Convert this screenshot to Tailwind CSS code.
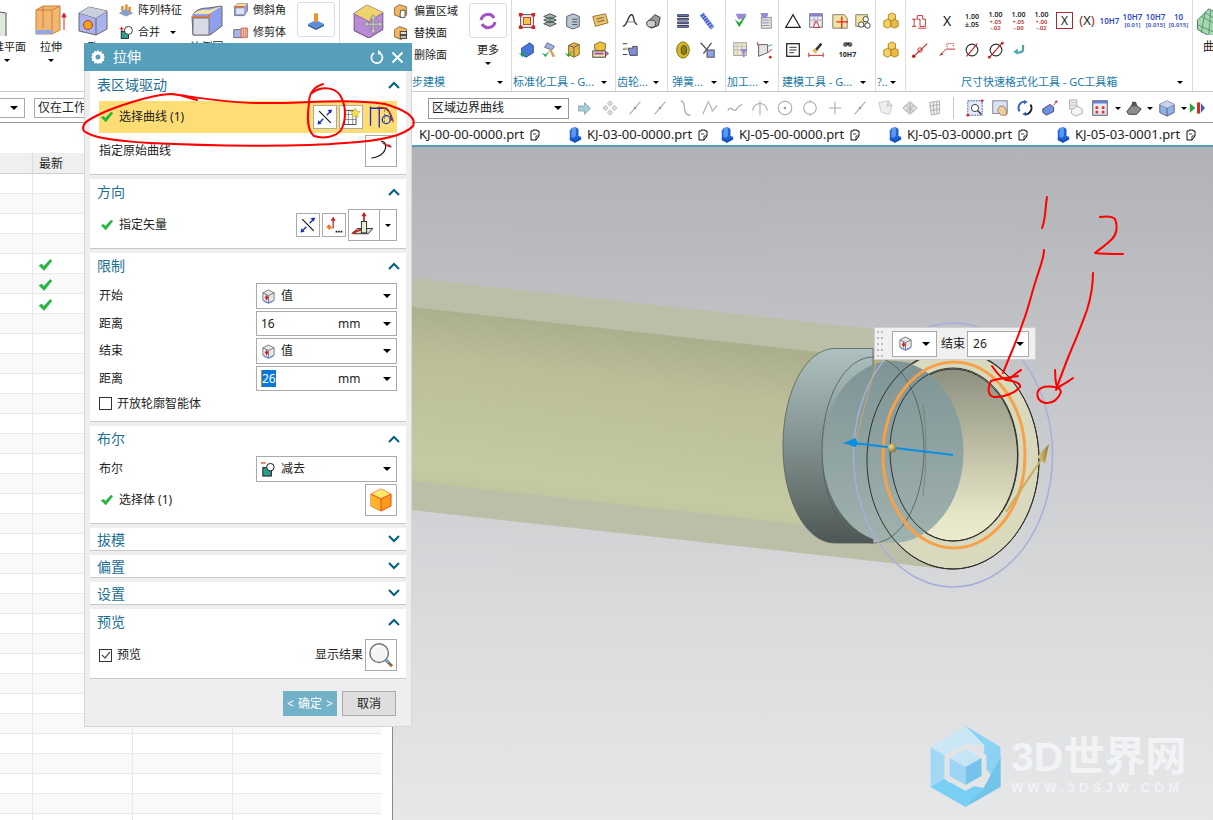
<!DOCTYPE html>
<html lang="zh-CN">
<head>
    <meta charset="UTF-8">
    <title>拉伸</title>
    <script src="https://cdn.jsdelivr.net/npm/@tailwindcss/browser@4"></script>
</head>
<body class="w-[1213px] h-[820px] overflow-hidden bg-white text-[#222] text-[12px] font-['Noto_Sans','Noto_Sans_CJK_SC',sans-serif]">

<!-- icon sheet -->
<svg class="hidden">
    <defs>
        <linearGradient id="gOrange" x1="0" y1="0" x2="0" y2="1"><stop offset="0" stop-color="#ffd23a"/><stop offset="1" stop-color="#ff7a10"/></linearGradient>
        <linearGradient id="gBlue" x1="0" y1="0" x2="1" y2="1"><stop offset="0" stop-color="#b9c4f5"/><stop offset="1" stop-color="#6a7fdc"/></linearGradient>
    </defs>
    <symbol id="bigPlane" viewBox="0 0 32 32"><path d="M-14 4 19 9v25L-14 28z" fill="#dfe8df" stroke="#555"/></symbol>
    <symbol id="bigExtrude" viewBox="0 0 32 32"><path d="M1 6 8 2h17v24l-8 4H1z" fill="#f3b671" stroke="#c9803a"/><path d="M1 6h16v24M17 6l8-4M8 2v22" fill="none" stroke="#c9803a"/><path d="M1 26h16v4H1z" fill="#8fa6e8"/><path d="M29 26V10M27 13l2-4 2 4z" stroke="#e02020" fill="#e02020"/></symbol>
    <symbol id="bigHole" viewBox="0 0 32 32"><path d="M2 9 12 3l18 4v18l-11 6-17-4z" fill="#a9b4ee" stroke="#666"/><path d="M2 9l17 5 11-7M19 14v17" fill="none" stroke="#666"/><path d="M2 9l10-6 18 4-11 7z" fill="#c8cfde"/><circle cx="11" cy="21" r="4.5" fill="#f2a21b" stroke="#b9362a"/></symbol>
    <symbol id="bigBlend" viewBox="0 0 32 32"><path d="M1 13C3 6 10 4 17 4l14-2v20l-12 9H2z" fill="#8f9ff0" stroke="#666"/><path d="M1 13C3 7 10 5 18 6l13-4-13 8H1z" fill="#efe3a8"/><path d="M1 13h17c0-2 0-3 0-3" fill="none" stroke="#e37a3c" stroke-width="2"/><path d="M2 14h16v17H2z" fill="#d7dbe6" stroke="#777"/></symbol>
    <symbol id="bigMove" viewBox="0 0 32 32"><path d="M2 9 14 1l15 7v16l-13 8-14-7z" fill="#b98ad6" stroke="#7d5a92"/><path d="M2 9l14 7 13-8" fill="none" stroke="#7d5a92"/><path d="M2 9 14 1l15 7-13 8z" fill="#f0d36a"/><path d="M20 10l3 4h-2v4h4v-2l4 3-4 3v-2h-4v4h2l-3 4-3-4h2v-4h-4v2l-4-3 4-3v2h4v-4h-2z" fill="#c6c6c6" stroke="#777" stroke-width=".6"/></symbol>
    <symbol id="pattern" viewBox="0 0 20 20"><path d="M1 14 10 8l9 6-9 4z" fill="#8aa0c8"/><rect x="4" y="5" width="3" height="6" fill="#e08a28"/><rect x="9" y="3" width="3" height="6" fill="#e08a28"/><rect x="13" y="6" width="3" height="6" fill="#e08a28"/></symbol>
    <symbol id="unite" viewBox="0 0 20 20"><path d="M2 6h5M4.500 3.500v5" stroke="#e02020" stroke-width="1.400"/><rect x="4" y="9" width="9" height="9" fill="#2f9c90" stroke="#111"/><circle cx="13" cy="8" r="5" fill="#fff" stroke="#111"/></symbol>
    <symbol id="chamfer" viewBox="0 0 20 20"><path d="M2 5 6 2h12v9l-4 6H2z" fill="#8ea3e8" stroke="#666"/><path d="M2 5l4-3h12l-4 4z" fill="#f2dca0"/><path d="M2 6h12" stroke="#e06a30" stroke-width="2"/><path d="M4 8h10v7H4z" fill="#dfe3ee"/></symbol>
    <symbol id="trim" viewBox="0 0 20 20"><path d="M1 7h11v10H1z" fill="#a8b6ee" stroke="#555"/><path d="M10 5h8v12h-8z" fill="#f0b592" stroke="#c55"/><path d="M13 5v12M16 5v12" stroke="#c55" stroke-dasharray="1.500 1.500"/></symbol>
    <symbol id="boss" viewBox="0 0 20 20"><path d="M2 14 10 10l8 4-8 4z" fill="#5c8fd8"/><path d="M2 14v2l8 4 8-4v-2l-8 4z" fill="#2e5fa8"/><rect x="8" y="3" width="4" height="9" rx="1.500" fill="#f0932e"/></symbol>
    <symbol id="offsetFace" viewBox="0 0 20 20"><path d="M2 6 8 2l9 3v10l-7 3-8-3z" fill="#f2b560" stroke="#7a5a2a"/><path d="M10 9h5v9h-6v-5z" fill="#fff" stroke="#333"/></symbol>
    <symbol id="replaceFace" viewBox="0 0 20 20"><path d="M2 6 8 2l9 3v10l-7 3-8-3z" fill="#f2b560" stroke="#7a5a2a"/><rect x="9" y="8" width="8" height="4" fill="#ddd" stroke="#333"/><rect x="9" y="13" width="8" height="4" fill="#bbb" stroke="#333"/></symbol>
    <symbol id="more" viewBox="0 0 20 20"><path d="M3 9a7 7 0 0 1 13-2" fill="none" stroke="#a052c8" stroke-width="3"/><path d="M17 11a7 7 0 0 1-13 2" fill="none" stroke="#a052c8" stroke-width="3"/></symbol>
    <symbol id="stdFrame" viewBox="0 0 20 20"><rect x="3" y="3" width="14" height="14" fill="none" stroke="#333"/><rect x="6" y="6" width="8" height="8" fill="#f2c649" stroke="#e02020"/><path d="M1 1h4v4H1zM15 1h4v4h-4zM1 15h4v4H1zM15 15h4v4h-4z" fill="#e02020"/></symbol>
    <symbol id="stack" viewBox="0 0 20 20"><path d="M3 5 10 2l7 3-7 3zM3 9l7-3 7 3-7 3zM3 13l7-3 7 3-7 3z" fill="#9db39b" stroke="#445"/></symbol>
    <symbol id="doc3d" viewBox="0 0 20 20"><path d="M3 5 10 2l7 3v11l-7 3-7-3z" fill="#b8c8c8" stroke="#557"/><path d="M9 8h6M9 11h6M9 14h6" stroke="#447"/></symbol>
    <symbol id="note" viewBox="0 0 20 20"><path d="M2 5 16 2l3 10-14 4z" fill="#efc468" stroke="#8a6a30"/><path d="M6 8l8-2M7 11l8-2" stroke="#555"/></symbol>
    <symbol id="blueCheck" viewBox="0 0 20 20"><path d="M4 8 13 2l4 3v8l-8 5-5-3z" fill="#4a78d8" stroke="#2a4a90"/><path d="M1 13l4 5 5-8-5 5z" fill="#1aa83c"/></symbol>
    <symbol id="hammerCheck" viewBox="0 0 20 20"><path d="M7 2l8 4-3 4-8-3z" fill="#9fb2e8" stroke="#667"/><path d="M11 9l5 8-3 1-4-8z" fill="#d8a060"/><path d="M1 13l4 5 5-8-5 5z" fill="#1aa83c"/></symbol>
    <symbol id="boxCheck" viewBox="0 0 20 20"><path d="M5 5 11 2l6 2v11l-6 3-6-3z" fill="#e9b640" stroke="#7a6a30"/><path d="M5 5l6 2 6-3M11 7v11" fill="none" stroke="#557"/><path d="M1 13l4 5 5-8-5 5z" fill="#1aa83c"/></symbol>
    <symbol id="boxTool" viewBox="0 0 20 20"><path d="M4 4 10 1l6 2v6l-6 3-6-3z" fill="#efc040" stroke="#7a6a30"/><rect x="2" y="11" width="14" height="7" fill="#f3e6a0" stroke="#333"/><path d="M4 14h10" stroke="#a040c0" stroke-width="2"/><path d="M17 11l3 3-3 3z" fill="#b040c0"/></symbol>
    <symbol id="gearLine" viewBox="0 0 20 20"><path d="M2 16C8 15 7 3 12 3c3 0 1 10 6 11" fill="none" stroke="#333" stroke-width="1.500"/><path d="M5 11h11" stroke="#777"/></symbol>
    <symbol id="gearSolid" viewBox="0 0 20 20"><path d="M3 12 12 3l6 3-2 9-8 3z" fill="#9a9a9a" stroke="#333"/><ellipse cx="8" cy="13" rx="5" ry="4" fill="#ccc" stroke="#333"/></symbol>
    <symbol id="gearMeasure" viewBox="0 0 20 20"><path d="M2 3h5M2 9h5M2 15h5" stroke="#333"/><path d="M8 8h5v-2h5v10h-8z" fill="#7f90d8" stroke="#445"/><path d="M8 8 5 6v4z" fill="#efc060"/></symbol>
    <symbol id="coil" viewBox="0 0 20 20"><path d="M4 3h12v2H4zM4 7h12v2H4zM4 11h12v2H4zM4 15h12v2H4z" fill="#6f83d8" stroke="#334"/></symbol>
    <symbol id="spring" viewBox="0 0 20 20"><path d="M4 2l12 16" stroke="#3f5ac8" stroke-width="5"/><path d="M4 2l12 16" stroke="#b9c6f4" stroke-width="5" stroke-dasharray="1 2"/></symbol>
    <symbol id="washer" viewBox="0 0 20 20"><ellipse cx="10" cy="10" rx="7" ry="9" fill="#d8b820" stroke="#7a6a10"/><ellipse cx="11" cy="10" rx="3" ry="5" fill="#8f8010" stroke="#443"/></symbol>
    <symbol id="scissor" viewBox="0 0 20 20"><path d="M3 2l11 12M15 2 6 14" stroke="#555" stroke-width="1.500"/><rect x="10" y="10" width="8" height="8" fill="#8ea3e8" stroke="#445"/></symbol>
    <symbol id="funnelCheck" viewBox="0 0 20 20"><path d="M4 2h12l-3 6h-6z" fill="#9c8ad8"/><path d="M3 8l5 9 9-15-9 10z" fill="#1aa83c"/></symbol>
    <symbol id="docFunnel" viewBox="0 0 20 20"><rect x="7" y="6" width="11" height="12" fill="#e6e6e6" stroke="#888"/><path d="M8 9h8M8 12h8M8 15h8" stroke="#88a"/><path d="M6 1h9l-2 6H8z" fill="#9c8ad8"/></symbol>
    <symbol id="gridFunnel" viewBox="0 0 20 20"><rect x="2" y="2" width="14" height="14" fill="#efe9c8" stroke="#999"/><path d="M2 6h14M2 10h14M6 2v14M11 2v14" stroke="#bbb"/><path d="M9 9h8l-3 5v4h-2v-4z" fill="#9c8ad8"/></symbol>
    <symbol id="axis" viewBox="0 0 20 20"><path d="M4 4v13l10-4V4z" fill="#e4e4e4" stroke="#555"/><path d="M3 1v4M14 13l5-4" stroke="#e02020"/><path d="M14 6l5-2" stroke="#2aa040"/><circle cx="17" cy="18" r="1.500" fill="#e02020"/></symbol>
    <symbol id="triangle" viewBox="0 0 20 20"><path d="M10 3 18 17H2z" fill="none" stroke="#222" stroke-width="1.400"/></symbol>
    <symbol id="tableTri" viewBox="0 0 20 20"><rect x="3" y="2" width="14" height="15" fill="#ecebf8" stroke="#667"/><rect x="3" y="2" width="14" height="3" fill="#8f7fc8"/><path d="M3 9h14M8 5v12M12 5v12" stroke="#aaa"/><path d="M10 10l4 7H7z" fill="#fff" stroke="#d02020"/></symbol>
    <symbol id="noteCross" viewBox="0 0 20 20"><path d="M2 3h13l3 4v11H2z" fill="#f4e4a0" stroke="#776"/><path d="M12 5v13M6 11h13" stroke="#e02020" stroke-width="1.400"/></symbol>
    <symbol id="folderParts" viewBox="0 0 20 20"><path d="M2 3h13v13H2z" fill="#f4e4a0" stroke="#776"/><circle cx="13" cy="8" r="3" fill="#fff" stroke="#333"/><circle cx="8" cy="14" r="3" fill="#fff" stroke="#333"/><circle cx="15" cy="15" r="3" fill="#fff" stroke="#333"/></symbol>
    <symbol id="cubes" viewBox="0 0 20 20"><path d="M7 3l4-2 4 2v5l-4 2-4-2z" fill="#f3cf64" stroke="#a88520"/><path d="M2 10l4-2 4 2v6l-4 2-4-2z" fill="#f3cf64" stroke="#a88520"/><path d="M10 10l4-2 4 2v6l-4 2-4-2z" fill="#ecb742" stroke="#a88520"/></symbol>
    <symbol id="lines" viewBox="0 0 20 20"><rect x="3" y="3" width="14" height="14" fill="#fff" stroke="#222" stroke-width="1.400"/><path d="M6 7h8M6 10h8M6 13h5" stroke="#222"/></symbol>
    <symbol id="brushDim" viewBox="0 0 20 20"><path d="M9 9l6-7 2 2-6 7z" fill="#333"/><path d="M8 8l4 4-3 2-3-3z" fill="#e6c050"/><path d="M2 13v5M18 13v5M2 16h16" stroke="#d02020"/></symbol>
    <symbol id="binoc" viewBox="0 0 20 20"><circle cx="5" cy="7" r="4" fill="#5a6a78" stroke="#222"/><circle cx="14" cy="7" r="4" fill="#5a6a78" stroke="#222"/><rect x="7" y="3" width="5" height="4" fill="#223"/></symbol>
    <symbol id="datum" viewBox="0 0 20 20"><path d="M7 4h6v4h3v8h-6V8H7z" fill="none" stroke="#c02020"/><path d="M1 8h5M1 16h5M3.500 8v8M8 18h9" stroke="#c02020"/></symbol>
    <symbol id="slashDim" viewBox="0 0 20 20"><path d="M3 17 18 3" stroke="#c02020" stroke-width="1.200"/><circle cx="3" cy="17" r="2" fill="#c02020"/><circle cx="10" cy="10" r="2.500" fill="none" stroke="#c02020"/></symbol>
    <symbol id="leader" viewBox="0 0 20 20"><path d="M2 16 9 9h10" fill="none" stroke="#c02020"/><path d="M2 16l4-1-2-2z" fill="#c02020"/><path d="M10 7V3h7v4" fill="none" stroke="#c02020" stroke-dasharray="1.500 1"/></symbol>
    <symbol id="dia1" viewBox="0 0 20 20"><circle cx="10" cy="10" r="6.500" fill="none" stroke="#333" stroke-width="1.300"/><path d="M4 17 16 3" stroke="#c02020" stroke-width="1.300"/></symbol>
    <symbol id="dia2" viewBox="0 0 20 20"><circle cx="10" cy="10" r="6.500" fill="none" stroke="#333" stroke-width="1.300"/><path d="M2 19 18 1" stroke="#c02020" stroke-width="1.300"/><circle cx="2.500" cy="18" r="1.500" fill="#c02020"/><circle cx="17" cy="2.500" r="1.500" fill="#c02020"/></symbol>
    <symbol id="backArrow" viewBox="0 0 20 20"><path d="M16 4v6c0 3-3 4-6 4H9" fill="none" stroke="#4aa5ad" stroke-width="3"/><path d="M3 13l6-4v8z" fill="#4aa5ad"/></symbol>
    <symbol id="mesh" viewBox="0 0 20 30"><path d="M2 14 14 2l16 8v14l-14 8L2 24z" fill="#a5d8b0" stroke="#3a7a58"/><path d="M6 10l18 10M10 6l16 10M2 19l20 9M10 6 6 28M16 4l-2 26M22 6l-2 24" fill="none" stroke="#3a7a58" stroke-width=".7"/></symbol>
    <symbol id="arrowR" viewBox="0 0 20 20"><path d="M3 7h7V3l7 7-7 7v-4H3z" fill="#a6cdd8" stroke="#7fa6b4"/></symbol>
    <symbol id="gDiamond" viewBox="0 0 20 20"><path d="M10 2l3 3-3 3-3-3zM10 12l3 3-3 3-3-3zM2 10l3-3 3 3-3 3zM12 10l3-3 3 3-3 3z" fill="#d8d8d8" stroke="#bbb"/></symbol>
    <symbol id="gLine" viewBox="0 0 20 20"><path d="M4 17 16 3" stroke="#aaa" stroke-width="1.200"/><circle cx="10" cy="10" r="1.500" fill="#999"/></symbol>
    <symbol id="gCurve" viewBox="0 0 20 20"><path d="M5 2c8 0 0 16 11 16" fill="none" stroke="#aaa" stroke-width="1.300"/></symbol>
    <symbol id="gPeak" viewBox="0 0 20 20"><path d="M2 17 8 3l5 10 5-6" fill="none" stroke="#aaa" stroke-width="1.200"/><circle cx="8" cy="4" r="1.500" fill="#ccc"/><circle cx="13" cy="13" r="1.500" fill="#ccc"/></symbol>
    <symbol id="gWave" viewBox="0 0 20 20"><path d="M2 13c4-8 6 4 10-2s4-3 6-5" fill="none" stroke="#aaa" stroke-width="1.300"/></symbol>
    <symbol id="gArc" viewBox="0 0 20 20"><path d="M2 13a8 8 0 0 1 16 0M10 2v16" fill="none" stroke="#aaa" stroke-width="1.200"/></symbol>
    <symbol id="gCircle" viewBox="0 0 20 20"><circle cx="10" cy="10" r="7.500" fill="none" stroke="#aaa" stroke-width="1.200"/><circle cx="10" cy="10" r="1.500" fill="#999"/></symbol>
    <symbol id="gRing" viewBox="0 0 20 20"><circle cx="10" cy="10" r="7" fill="none" stroke="#aaa" stroke-width="1.200"/><path d="M10 1v3M10 16v3" stroke="#aaa"/></symbol>
    <symbol id="gPlus" viewBox="0 0 20 20"><path d="M10 3v14M3 10h14" stroke="#aaa" stroke-width="1.200"/></symbol>
    <symbol id="gSheet" viewBox="0 0 20 20"><path d="M3 4 14 2l4 5-3 10-9-2z" fill="#eee" stroke="#c8c8c8"/><path d="M14 2l-2 6 6-1" fill="#ddd" stroke="#c8c8c8"/></symbol>
    <symbol id="gPatch" viewBox="0 0 20 20"><path d="M2 10 10 3l8 7-8 7z" fill="#ddd" stroke="#aaa"/><path d="M6 7l8 7M10 3v14M14 7l-8 7" stroke="#aaa"/></symbol>
    <symbol id="gGrid" viewBox="0 0 20 20"><path d="M4 4 15 2v14L6 18z" fill="#f0f0f0" stroke="#aaa"/><path d="M8 3l1 14M12 3v13M4 8l11-2M5 13l10-2" stroke="#aaa"/></symbol>
    <symbol id="viewBox" viewBox="0 0 20 20"><rect x="2" y="2" width="16" height="16" fill="#e6e9f6" stroke="#3355bb" stroke-dasharray="2 1"/><circle cx="10" cy="10" r="4" fill="#fff" stroke="#333"/><path d="M13 13l4 4" stroke="#333" stroke-width="1.500"/><circle cx="2" cy="18" r="1.500" fill="#d02020"/><circle cx="18" cy="2" r="1.500" fill="#d02020"/></symbol>
    <symbol id="viewHand" viewBox="0 0 20 20"><rect x="2" y="2" width="16" height="14" fill="#dbe2f2" stroke="#778"/><path d="M10 8h4l3 4v6h-6l-4-5z" fill="#f0cf9c" stroke="#977"/></symbol>
    <symbol id="viewRotate" viewBox="0 0 20 20"><path d="M4 14a7 7 0 0 1 6-11" fill="none" stroke="#3a60c8" stroke-width="2"/><path d="M16 6a7 7 0 0 1-6 11" fill="none" stroke="#223" stroke-width="2"/><path d="M9 1l4 2-4 3zM11 19l-4-2 4-3z" fill="#3a60c8"/></symbol>
    <symbol id="viewSpot" viewBox="0 0 20 20"><path d="M2 11 10 6l4 3v5l-8 4-4-3z" fill="#6f8fe0" stroke="#446"/><path d="M14 7l3-4" stroke="#e02020"/><circle cx="17" cy="3" r="1.300" fill="#e02020"/></symbol>
    <symbol id="viewSheets" viewBox="0 0 20 20"><rect x="4" y="1" width="8" height="10" fill="#eee" stroke="#aaa"/><path d="M5 4h6M5 7h6" stroke="#bbb"/><path d="M6 12l6-4 6 3v5l-7 3-5-3z" fill="#f4f4f4" stroke="#aaa"/></symbol>
    <symbol id="viewTable" viewBox="0 0 20 20"><rect x="2" y="2" width="16" height="16" fill="#e9edfb" stroke="#445"/><rect x="2" y="2" width="16" height="3" fill="#6f7fd0"/><path d="M5 8h3v3H5zM12 8h3v3h-3zM5 13h3v3H5zM12 13h3v3h-3z" fill="#e03820"/></symbol>
    <symbol id="viewPrism" viewBox="0 0 20 20"><path d="M2 14 9 5l9 6-5 6H4z" fill="#8d8d8d" stroke="#333"/><path d="M8 3h4l2 5H7z" fill="#555"/></symbol>
    <symbol id="viewCube" viewBox="0 0 20 20"><path d="M2 6 10 2l8 4v9l-8 4-8-4z" fill="#90b3e0" stroke="#557"/><path d="M2 6l8 4 8-4M10 10v9" fill="none" stroke="#557"/><path d="M2 6l8-4 8 4-8 4z" fill="#c4d4ec"/></symbol>
    <symbol id="viewMulti" viewBox="0 0 20 20"><path d="M1 4l7 6-7 6z" fill="#2aa040"/><path d="M10 3h4v14h-4z" fill="#d03020"/><path d="M15 4l5 6-5 6z" fill="#4060c0"/></symbol>
    <symbol id="part" viewBox="0 0 16 18"><path d="M4 1 9 0l3 2v8l3 1v3l-7 4-6-3V4z" fill="#1f62d8"/><path d="M4 1 9 0v10l-3 2-2-1z" fill="#5f9af0"/><path d="M2 13l6 3 7-3" fill="none" stroke="#0e3a90"/></symbol>
    <symbol id="page" viewBox="0 0 10 12"><path d="M1 2h2V1h4v1h2v5L6 11H1z" fill="#fff" stroke="#111"/><path d="M6 11V7h3M3 5h3" fill="none" stroke="#111" stroke-width=".8"/></symbol>
    <symbol id="check" viewBox="0 0 14 12"><path d="M0 6.500 3 5l2 2.500L12 0l2 1.500L5.500 12z" fill="#1ebb3b" stroke="#0c8f26" stroke-width=".4"/></symbol>
    <symbol id="up" viewBox="0 0 12 8"><path d="M1 7 6 2l5 5" fill="none" stroke="#006080" stroke-width="2"/></symbol>
    <symbol id="down" viewBox="0 0 12 8"><path d="M1 1l5 5 5-5" fill="none" stroke="#006080" stroke-width="2"/></symbol>
    <symbol id="vec" viewBox="0 0 24 24"><path d="M5 5l14 14" stroke="#111" stroke-width="1.300"/><path d="M14 10l6-6M4 20l6-6" stroke="#1a2fc0" stroke-width="1.600"/><path d="M20 3l-1 5-4-4zM3 21l1-5 4 4z" fill="#1a2fc0"/></symbol>
    <symbol id="sketchStar" viewBox="0 0 24 24"><rect x="4" y="4" width="14" height="17" fill="#fff" stroke="#333"/><path d="M4 9h14M4 15h14M9 4v17M14 4v17" stroke="#555" stroke-width=".7"/><path d="M17 1l2 4 4 .5-3 3 1 4-4-2-4 2 1-4-3-3 4-.5z" fill="#f4e04a" stroke="#b8a020" stroke-width=".6"/></symbol>
    <symbol id="regionCurve" viewBox="0 0 32 32"><path d="M4 4v22M4 6h18c3 2 5 6 6 14M14 6v22" fill="none" stroke="#1a2fc0" stroke-width="1.500"/><path d="M12 5c10-1 16 6 18 17" fill="none" stroke="#c02020" stroke-width="1.400"/><circle cx="22" cy="19" r="4.500" fill="none" stroke="#1a2fc0" stroke-width="1.500"/><path d="M20 8v16" stroke="#2a8a60" stroke-dasharray="2 2"/></symbol>
    <symbol id="originCurve" viewBox="0 0 32 32"><path d="M5 24c10-1 18-7 16-16-1-2-3-3-5-3" fill="none" stroke="#111" stroke-width="1.400"/><path d="M18 7l9 4" stroke="#c02020" stroke-width="1.300"/><path d="M29 12l-6-1 2-3z" fill="#c02020"/></symbol>
    <symbol id="inferVec" viewBox="0 0 24 24"><path d="M10 16a4 4 0 0 1-4-4" fill="none" stroke="#f07a20" stroke-width="1.500"/><path d="M3 14l3-3 3 3-3 4z" fill="#f07a20"/><path d="M11 16V5" stroke="#c02020" stroke-width="1.500"/><path d="M11 2l-3 5h6z" fill="#c02020"/><path d="M14 20h2M17 20h2M20 20h2" stroke="#111" stroke-width="2"/></symbol>
    <symbol id="zcVec" viewBox="0 0 32 32"><path d="M8 20h18l-5 6H3z" fill="#ddd" stroke="#222"/><rect x="13" y="12" width="6" height="13" fill="#dff0d0" stroke="#222"/><path d="M16 12V3" stroke="#c02020" stroke-width="2"/><path d="M16 1l-3 5h6z" fill="#c02020"/><path d="M13 21 3 25" stroke="#c02020" stroke-width="2"/><path d="M1 26l5-4 1 3z" fill="#c02020"/></symbol>
    <symbol id="valCube" viewBox="0 0 16 16"><path d="M2 4 8 1l6 3v8l-6 3-6-3z" fill="#e6e6e6" stroke="#777"/><path d="M2 4l6 3 6-3M8 7v8" fill="none" stroke="#777"/><path d="M3 13l5 2 5-2" fill="none" stroke="#6f8fe0" stroke-width="1.400"/><path d="M6 12V8M4.500 10 6 7.500 7.500 10" fill="none" stroke="#d02020" stroke-width="1.300"/></symbol>
    <symbol id="subtract" viewBox="0 0 16 16"><path d="M0 1h5" stroke="#d02020" stroke-width="1.200"/><rect x="2" y="6" width="9" height="9" fill="#2f9c90" stroke="#111"/><circle cx="10" cy="5.500" r="4" fill="#fff" stroke="#111"/></symbol>
    <symbol id="orangeCube" viewBox="0 0 24 24"><path d="M2 6 12 1l10 5v12l-10 5L2 18z" fill="#ff9a1e" stroke="#ee4a10"/><path d="M2 6l10 5v12L2 18z" fill="#ffb52a"/><path d="M2 6 12 1l10 5-10 5z" fill="#ffe66a"/><path d="M2 6l10 5 10-5M12 11v12" fill="none" stroke="#ee4a10"/></symbol>
    <symbol id="magnifier" viewBox="0 0 28 28"><circle cx="12" cy="12" r="10" fill="#f4f4f6" stroke="#777" stroke-width="1.600"/><path d="M5 11a7 7 0 0 1 7-7" fill="none" stroke="#fff" stroke-width="2"/><path d="M19 19l7 7" stroke="#8a7040" stroke-width="3"/><path d="M19 19l3 3" stroke="#6aa8c8" stroke-width="3"/></symbol>
</svg>

<!-- ribbon -->
<div class="flex h-[92px] border-b border-[#c9c9c9] bg-white overflow-hidden">
    <div class="w-[340px] shrink-0 border-r border-[#dcdcdc] flex pt-[4px]">
        <div class="w-[31px] flex flex-col">
            <svg class="w-[32px] h-[32px] -ml-[13px]"><use href="#bigPlane"/></svg>
            <span class="mt-[3px] -ml-[7px] text-[11px] leading-[16px] whitespace-nowrap">准平面</span>
            <span class="w-0 h-0 mt-[4px] ml-[4px] border-x-[3px] border-x-transparent border-t-[3px] border-t-black"></span>
        </div>
        <div class="w-[38px] ml-[1px] flex flex-col items-center">
            <svg class="w-[32px] h-[32px]"><use href="#bigExtrude"/></svg>
            <span class="mt-[3px] text-[11px] leading-[16px]">拉伸</span>
            <span class="w-0 h-0 mt-[4px] border-x-[3px] border-x-transparent border-t-[3px] border-t-black"></span>
        </div>
        <div class="w-[46px] flex flex-col items-center">
            <svg class="w-[32px] h-[32px]"><use href="#bigHole"/></svg>
            <span class="mt-[3px] text-[11px] leading-[16px]">孔</span>
        </div>
        <div class="w-[71px] flex flex-col gap-[6px] -mt-[2px]">
            <div class="flex items-center gap-[4px] pl-[2px] h-[16px]"><svg class="w-[16px] h-[16px]"><use href="#pattern"/></svg><span class="text-[11px] whitespace-nowrap">阵列特征</span></div>
            <div class="flex items-center gap-[4px] pl-[2px] h-[16px]"><svg class="w-[16px] h-[16px]"><use href="#unite"/></svg><span class="text-[11px]">合并</span><span class="w-0 h-0 ml-[6px] border-x-[3px] border-x-transparent border-t-[3px] border-t-black"></span></div>
        </div>
        <div class="w-[40px] flex flex-col items-center">
            <svg class="w-[32px] h-[32px]"><use href="#bigBlend"/></svg>
            <span class="mt-[3px] text-[11px] leading-[16px] whitespace-nowrap">边倒圆</span>
        </div>
        <div class="w-[70px] flex flex-col gap-[6px] -mt-[2px] pl-[4px]">
            <div class="flex items-center gap-[4px] pl-[2px] h-[16px]"><svg class="w-[16px] h-[16px]"><use href="#chamfer"/></svg><span class="text-[11px]">倒斜角</span></div>
            <div class="flex items-center gap-[4px] pl-[2px] h-[16px]"><svg class="w-[16px] h-[16px]"><use href="#trim"/></svg><span class="text-[11px]">修剪体</span></div>
        </div>
        <div class="w-[38px] h-[35px] -mt-[2px] border border-[#dcdcdc] rounded-[3px] flex items-center justify-center"><svg class="w-[20px] h-[20px]"><use href="#boss"/></svg></div>
    </div>
    <div class="w-[172px] shrink-0 border-r border-[#dcdcdc] flex flex-col">
        <div class="flex h-[73px] pt-[4px]">
            <div class="w-[48px] pl-[12px]"><svg class="w-[34px] h-[34px]"><use href="#bigMove"/></svg></div>
            <div class="w-[81px] flex flex-col gap-[6px] pl-[5px] -mt-[1px]">
                <div class="flex items-center gap-[5px] h-[16px]"><svg class="w-[16px] h-[16px]"><use href="#offsetFace"/></svg><span class="text-[11px] whitespace-nowrap">偏置区域</span></div>
                <div class="flex items-center gap-[5px] h-[16px]"><svg class="w-[16px] h-[16px]"><use href="#replaceFace"/></svg><span class="text-[11px]">替换面</span></div>
                <div class="flex items-center gap-[5px] h-[16px]"><span class="w-[16px]"></span><span class="text-[11px]">删除面</span></div>
            </div>
            <div class="w-[38px] flex flex-col items-center">
                <div class="w-[38px] h-[35px] -mt-[1px] border border-[#dcdcdc] rounded-[3px] flex items-center justify-center"><svg class="w-[20px] h-[20px]"><use href="#more"/></svg></div>
                <span class="mt-[4px] text-[11px] leading-[16px]">更多</span>
                <span class="w-0 h-0 mt-[4px] border-x-[3px] border-x-transparent border-t-[3px] border-t-black"></span>
            </div>
        </div>
        <div class="flex items-center h-[18px] pl-[72px] pr-[8px] justify-between text-[11px] text-[#1b7aa6]"><span>步建模</span><span class="w-0 h-0 border-x-[3px] border-x-transparent border-t-[3px] border-t-black"></span></div>
    </div>
    <div class="w-[104px] shrink-0 border-r border-[#dcdcdc] flex flex-col">
        <div class="grid grid-cols-[22px_24px_22px_31px] grid-rows-[29px_29px] h-[73px] pt-[6px] pl-[4px] place-items-center">
            <svg class="w-[18px] h-[18px]"><use href="#stdFrame"/></svg><svg class="w-[18px] h-[18px]"><use href="#stack"/></svg><svg class="w-[18px] h-[18px]"><use href="#doc3d"/></svg><svg class="w-[18px] h-[18px]"><use href="#note"/></svg>
            <svg class="w-[18px] h-[18px]"><use href="#blueCheck"/></svg><svg class="w-[18px] h-[18px]"><use href="#hammerCheck"/></svg><svg class="w-[18px] h-[18px]"><use href="#boxCheck"/></svg><svg class="w-[18px] h-[18px]"><use href="#boxTool"/></svg>
        </div>
        <div class="flex items-center h-[18px] pl-[1px] pr-[8px] justify-between text-[11px] text-[#1b7aa6]"><span class="whitespace-nowrap">标准化工具 - G...</span><span class="w-0 h-0 border-x-[3px] border-x-transparent border-t-[3px] border-t-black"></span></div>
    </div>
    <div class="w-[52px] shrink-0 border-r border-[#dcdcdc] flex flex-col">
        <div class="grid grid-cols-[22px_24px] grid-rows-[29px_29px] h-[73px] pt-[6px] pl-[3px] place-items-center">
            <svg class="w-[18px] h-[18px]"><use href="#gearLine"/></svg><svg class="w-[18px] h-[18px]"><use href="#gearSolid"/></svg>
            <svg class="w-[18px] h-[18px]"><use href="#gearMeasure"/></svg>
        </div>
        <div class="flex items-center h-[18px] pl-[1px] pr-[8px] justify-between text-[11px] text-[#1b7aa6]"><span>齿轮...</span><span class="w-0 h-0 border-x-[3px] border-x-transparent border-t-[3px] border-t-black"></span></div>
    </div>
    <div class="w-[58px] shrink-0 border-r border-[#dcdcdc] flex flex-col">
        <div class="grid grid-cols-[22px_26px] grid-rows-[29px_29px] h-[73px] pt-[6px] pl-[4px] place-items-center">
            <svg class="w-[18px] h-[18px]"><use href="#coil"/></svg><svg class="w-[18px] h-[18px]"><use href="#spring"/></svg>
            <svg class="w-[18px] h-[18px]"><use href="#washer"/></svg><svg class="w-[18px] h-[18px]"><use href="#scissor"/></svg>
        </div>
        <div class="flex items-center h-[18px] pl-[4px] pr-[8px] justify-between text-[11px] text-[#1b7aa6]"><span>弹簧...</span><span class="w-0 h-0 border-x-[3px] border-x-transparent border-t-[3px] border-t-black"></span></div>
    </div>
    <div class="w-[53px] shrink-0 border-r border-[#dcdcdc] flex flex-col">
        <div class="grid grid-cols-[22px_24px] grid-rows-[29px_29px] h-[73px] pt-[6px] pl-[4px] place-items-center">
            <svg class="w-[18px] h-[18px]"><use href="#funnelCheck"/></svg><svg class="w-[18px] h-[18px]"><use href="#docFunnel"/></svg>
            <svg class="w-[18px] h-[18px]"><use href="#gridFunnel"/></svg><svg class="w-[18px] h-[18px]"><use href="#axis"/></svg>
        </div>
        <div class="flex items-center h-[18px] pl-[1px] pr-[9px] justify-between text-[11px] text-[#1b7aa6]"><span>加工...</span><span class="w-0 h-0 border-x-[3px] border-x-transparent border-t-[3px] border-t-black"></span></div>
    </div>
    <div class="w-[97px] shrink-0 border-r border-[#dcdcdc] flex flex-col">
        <div class="grid grid-cols-[22px_24px_24px_22px] grid-rows-[29px_29px] h-[73px] pt-[6px] pl-[3px] place-items-center">
            <svg class="w-[18px] h-[18px]"><use href="#triangle"/></svg><svg class="w-[18px] h-[18px]"><use href="#tableTri"/></svg><svg class="w-[18px] h-[18px]"><use href="#noteCross"/></svg><svg class="w-[18px] h-[18px]"><use href="#folderParts"/></svg>
            <svg class="w-[18px] h-[18px]"><use href="#lines"/></svg><svg class="w-[18px] h-[18px]"><use href="#brushDim"/></svg>
            <div class="col-span-2 pl-[5px] flex flex-col items-center w-[24px] justify-self-start ml-[5px]"><svg class="w-[14px] h-[10px]"><use href="#binoc"/></svg><span class="text-[7px] leading-[8px] font-bold whitespace-nowrap">10H7</span></div>
        </div>
        <div class="flex items-center h-[18px] pl-[3px] pr-[9px] justify-between text-[11px] text-[#1b7aa6]"><span class="whitespace-nowrap">建模工具 - G...</span><span class="w-0 h-0 border-x-[3px] border-x-transparent border-t-[3px] border-t-black"></span></div>
    </div>
    <div class="w-[30px] shrink-0 border-r border-[#dcdcdc] flex flex-col">
        <div class="grid grid-rows-[29px_29px] h-[73px] pt-[6px] place-items-center">
            <svg class="w-[18px] h-[18px]"><use href="#cubes"/></svg><svg class="w-[18px] h-[18px]"><use href="#cubes"/></svg>
        </div>
        <div class="flex items-center h-[18px] pl-[1px] pr-[9px] justify-between text-[11px] text-[#1b7aa6]"><span>?..</span><span class="w-0 h-0 border-x-[3px] border-x-transparent border-t-[3px] border-t-black"></span></div>
    </div>
    <div class="w-[287px] shrink-0 border-r border-[#dcdcdc] flex flex-col">
        <div class="grid grid-cols-[28px_26px_24px_23px_23px_23px_23px_22px_23px_23px_23px_23px] grid-rows-[29px_29px] h-[73px] pt-[6px] place-items-center">
            <svg class="w-[18px] h-[18px]"><use href="#datum"/></svg>
            <span class="text-[14px] leading-none">X</span>
            <div class="flex flex-col items-center text-[7px] leading-[8px] font-semibold"><span>1.00</span><span>±.05</span></div>
            <div class="flex flex-col items-center text-[6px] leading-[6px] font-semibold"><span class="text-[7px] leading-[8px]">1.00</span><span class="text-[#b03030]">+.05</span><span class="text-[#b03030]">-.02</span></div>
            <div class="flex flex-col items-center text-[6px] leading-[6px] font-semibold"><span class="text-[7px] leading-[8px]">1.00</span><span class="text-[#b03030]">+.05</span><span class="text-[#b03030]">-.00</span></div>
            <div class="flex flex-col items-center text-[6px] leading-[6px] font-semibold"><span class="text-[7px] leading-[8px]">1.00</span><span class="text-[#b03030]">+.00</span><span class="text-[#b03030]">-.02</span></div>
            <span class="w-[17px] h-[17px] border-[1.5px] border-[#a03030] flex items-center justify-center text-[12px] leading-none">X</span>
            <span class="text-[13px] leading-none text-[#222] before:content-['('] before:text-[#a03030] after:content-[')'] after:text-[#a03030]">X</span>
            <span class="text-[8px] leading-none text-[#3348c8] font-semibold">10H7</span>
            <div class="flex flex-col items-center text-[8px] leading-[8px] text-[#3348c8] font-semibold"><span>10H7</span><span class="text-[6px]">[0.01]</span></div>
            <div class="flex flex-col items-center text-[8px] leading-[8px] text-[#3348c8] font-semibold"><span>10H7</span><span class="text-[6px]">[0.015]</span></div>
            <div class="flex flex-col items-center text-[8px] leading-[8px] text-[#3348c8] font-semibold"><span>10</span><span class="text-[6px]">[0.015]</span></div>
            <svg class="w-[18px] h-[18px]"><use href="#slashDim"/></svg><svg class="w-[18px] h-[18px]"><use href="#leader"/></svg><svg class="w-[18px] h-[18px]"><use href="#dia1"/></svg><svg class="w-[18px] h-[18px]"><use href="#dia2"/></svg><svg class="w-[15px] h-[15px]"><use href="#backArrow"/></svg>
        </div>
        <div class="relative flex items-center h-[18px] pl-[55px] pr-[9px] justify-between text-[11px] text-[#1b7aa6]"><span class="whitespace-nowrap">尺寸快速格式化工具 - GC工具箱</span><span class="w-0 h-0 border-x-[3px] border-x-transparent border-t-[3px] border-t-black"></span></div>
    </div>
    <div class="flex-1 flex flex-col overflow-hidden pt-[7px]">
        <svg class="w-[20px] h-[28px] shrink-0 ml-[2px]"><use href="#mesh"/></svg>
        <span class="ml-[10px] mt-[4px] leading-[16px] whitespace-nowrap">曲</span>
    </div>
</div>

<!-- selection bar -->
<div class="flex items-center h-[31px] pt-[2px] border-b border-[#9a9a9a] bg-white overflow-hidden">
    <div class="w-[25px] h-[20px] shrink-0 border border-[#aaa] border-l-0 flex items-center justify-end pr-[6px]"><span class="w-0 h-0 border-x-[4px] border-x-transparent border-t-[4px] border-t-black"></span></div>
    <div class="w-[64px] h-[20px] shrink-0 ml-[9px] pl-[3px] border border-[#aaa] border-r-0 whitespace-nowrap leading-[18px]">仅在工作部</div>
    <div class="w-[330px] shrink-0"></div>
    <div class="w-[141px] h-[21px] shrink-0 border border-[#999] pl-[3px] pr-[6px] flex items-center justify-between"><span>区域边界曲线</span><span class="w-0 h-0 border-x-[4px] border-x-transparent border-t-[4px] border-t-black"></span></div>
    <div class="shrink-0 ml-[3px] flex items-center">
        <span class="w-[25px] flex justify-center"><svg class="w-[17px] h-[17px]"><use href="#arrowR"/></svg></span>
        <span class="w-[25px] flex justify-center"><svg class="w-[18px] h-[18px]"><use href="#gDiamond"/></svg></span>
        <span class="w-[25px] flex justify-center"><svg class="w-[18px] h-[18px]"><use href="#gLine"/></svg></span>
        <span class="w-[25px] flex justify-center"><svg class="w-[18px] h-[18px]"><use href="#gLine"/></svg></span>
        <span class="w-[25px] flex justify-center"><svg class="w-[18px] h-[18px]"><use href="#gCurve"/></svg></span>
        <span class="w-[25px] flex justify-center"><svg class="w-[18px] h-[18px]"><use href="#gPeak"/></svg></span>
        <span class="w-[25px] flex justify-center"><svg class="w-[18px] h-[18px]"><use href="#gWave"/></svg></span>
        <span class="w-[25px] flex justify-center"><svg class="w-[18px] h-[18px]"><use href="#gArc"/></svg></span>
        <span class="w-[25px] flex justify-center"><svg class="w-[18px] h-[18px]"><use href="#gCircle"/></svg></span>
        <span class="w-[25px] flex justify-center"><svg class="w-[18px] h-[18px]"><use href="#gRing"/></svg></span>
        <span class="w-[25px] flex justify-center"><svg class="w-[18px] h-[18px]"><use href="#gPlus"/></svg></span>
        <span class="w-[25px] flex justify-center"><svg class="w-[18px] h-[18px]"><use href="#gLine"/></svg></span>
        <span class="w-[25px] flex justify-center"><svg class="w-[18px] h-[18px]"><use href="#gSheet"/></svg></span>
        <span class="w-[25px] flex justify-center"><svg class="w-[18px] h-[18px]"><use href="#gPatch"/></svg></span>
        <span class="w-[25px] flex justify-center"><svg class="w-[18px] h-[18px]"><use href="#gGrid"/></svg></span>
        <span class="w-[1px] h-[22px] bg-[#ccc] ml-[6px] mr-[8px]"></span>
        <span class="w-[25px] flex justify-center"><svg class="w-[18px] h-[18px]"><use href="#viewBox"/></svg></span>
        <span class="w-[25px] flex justify-center"><svg class="w-[18px] h-[18px]"><use href="#viewHand"/></svg></span>
        <span class="w-[25px] flex justify-center"><svg class="w-[18px] h-[18px]"><use href="#viewRotate"/></svg></span>
        <span class="w-[25px] flex justify-center"><svg class="w-[18px] h-[18px]"><use href="#viewSpot"/></svg></span>
        <span class="w-[25px] flex justify-center"><svg class="w-[18px] h-[18px]"><use href="#viewSheets"/></svg></span>
        <span class="w-[25px] flex justify-center"><svg class="w-[18px] h-[18px]"><use href="#viewTable"/></svg></span>
        <span class="w-0 h-0 ml-[3px] border-x-[3px] border-x-transparent border-t-[3px] border-t-black"></span>
        <span class="w-[26px] flex justify-center"><svg class="w-[18px] h-[18px]"><use href="#viewPrism"/></svg></span>
        <span class="w-0 h-0 border-x-[3px] border-x-transparent border-t-[3px] border-t-black"></span>
        <span class="w-[28px] flex justify-center"><svg class="w-[18px] h-[18px]"><use href="#viewCube"/></svg></span>
        <span class="w-0 h-0 border-x-[3px] border-x-transparent border-t-[3px] border-t-black"></span>
        <span class="w-[20px] flex justify-center"><svg class="w-[16px] h-[16px]"><use href="#viewMulti"/></svg></span>
    </div>
</div>

<div class="flex h-[697px]">
    <!-- part list behind the dialog -->
    <div class="w-[393px] shrink-0 border-r border-[#8a8a8a] bg-white overflow-hidden">
        <div class="h-[30px]"></div>
        <div class="flex h-[21px] w-[381px] bg-[#efefef] border-b border-[#cfcfcf]">
            <div class="w-[33px] border-r border-[#dcdcdc]"></div>
            <div class="w-[100px] border-r border-[#dcdcdc] pl-[6px] leading-[22px]">最新</div>
        </div>
        <div id="rows"></div>
    </div>

    <div class="flex-1 flex flex-col min-w-0">
        <!-- file tabs -->
        <div class="flex h-[22px] pt-[2px] items-center bg-white text-[13px] overflow-hidden">
            <div class="w-[175px] shrink-0 flex items-center pl-[26px]"><span class="whitespace-nowrap">KJ-00-00-0000.prt</span><svg class="w-[10px] h-[12px] ml-[6px]"><use href="#page"/></svg></div>
            <div class="w-[152px] shrink-0 flex items-center"><svg class="w-[14px] h-[16px] mr-[5px]"><use href="#part"/></svg><span class="whitespace-nowrap">KJ-03-00-0000.prt</span><svg class="w-[10px] h-[12px] ml-[6px]"><use href="#page"/></svg></div>
            <div class="w-[168px] shrink-0 flex items-center"><svg class="w-[14px] h-[16px] mr-[5px]"><use href="#part"/></svg><span class="whitespace-nowrap">KJ-05-00-0000.prt</span><svg class="w-[10px] h-[12px] ml-[6px]"><use href="#page"/></svg></div>
            <div class="w-[168px] shrink-0 flex items-center"><svg class="w-[14px] h-[16px] mr-[5px]"><use href="#part"/></svg><span class="whitespace-nowrap">KJ-05-03-0000.prt</span><svg class="w-[10px] h-[12px] ml-[6px]"><use href="#page"/></svg></div>
            <div class="shrink-0 flex items-center"><svg class="w-[14px] h-[16px] mr-[5px]"><use href="#part"/></svg><span class="whitespace-nowrap">KJ-05-03-0001.prt</span><svg class="w-[10px] h-[12px] ml-[6px]"><use href="#page"/></svg></div>
        </div>
        <div class="h-[2px] bg-[#4f9fb8]"></div>
        <!-- graphics window -->
        <svg class="w-[820px] h-[673px] block" viewBox="393 147 820 673">
            <defs>
                <linearGradient id="bg" x1="0" y1="0" x2="0" y2="1"><stop offset="0" stop-color="#b0b2b5"/><stop offset=".35" stop-color="#c4c6c9"/><stop offset=".7" stop-color="#dadbdd"/><stop offset="1" stop-color="#e6e7e9"/></linearGradient>
                <linearGradient id="tube" gradientUnits="userSpaceOnUse" x1="610" y1="330" x2="585" y2="525"><stop offset="0" stop-color="#acaf8d"/><stop offset=".25" stop-color="#bbbe97"/><stop offset=".8" stop-color="#c5caa2"/><stop offset="1" stop-color="#bcc09a"/></linearGradient>
                <linearGradient id="body" x1="0" y1="0" x2="0" y2="1"><stop offset="0" stop-color="#adc1c0"/><stop offset=".5" stop-color="#80908e"/><stop offset=".8" stop-color="#636f6c"/><stop offset="1" stop-color="#4d5755"/></linearGradient>
                <linearGradient id="hole" x1="0" y1="0" x2="0" y2="1"><stop offset="0" stop-color="#8e8f80"/><stop offset=".45" stop-color="#bcbda3"/><stop offset=".85" stop-color="#e6e7c8"/><stop offset="1" stop-color="#ebebcd"/></linearGradient>
                <linearGradient id="front" x1="0" y1="0" x2="0" y2="1"><stop offset="0" stop-color="#7f9494"/><stop offset=".5" stop-color="#8fa3a3"/><stop offset="1" stop-color="#a0b2ad"/></linearGradient>
                <linearGradient id="gold" x1="0" y1="0" x2="1" y2="0"><stop offset="0" stop-color="#e8d28a"/><stop offset="1" stop-color="#8f7a30"/></linearGradient>
                <radialGradient id="ball" cx=".4" cy=".35" r=".7"><stop offset="0" stop-color="#f0dfa0"/><stop offset="1" stop-color="#7d6a2c"/></radialGradient>
            </defs>
            <rect x="393" y="147" width="820" height="673" fill="url(#bg)"/>
            <path d="M393 276 953 338v232L393 508z" fill="#bcbfa8"/>
            <path d="M393 305 953 367v174L393 479z" fill="url(#tube)"/>
            <ellipse cx="953" cy="460" rx="86" ry="109" fill="#d9dabd" stroke="#2f2f2f" stroke-width="1"/>
            <ellipse cx="953" cy="455" rx="64.500" ry="86" fill="url(#hole)" stroke="#2f2f2f" stroke-width="1"/>
            <path d="M835 348.500h38V543h-38c-29 0-52-42-52-97s23-97.500 52-97.500z" fill="url(#body)" stroke="#55605c" stroke-width=".8"/>
            <ellipse cx="893" cy="452" rx="70.500" ry="91" fill="url(#front)"/>
            <ellipse cx="873" cy="450" rx="51" ry="93" fill="none" stroke="#4f5a58" stroke-width=".8"/>
            <path d="M923 404c4 30 4 60 0 92" fill="none" stroke="#6f7d7c" stroke-width=".8"/>
            <path d="M890 450c0-46 28-82 63-82 36 0 65 38 65 87s-29 86-65 86c-35 0-63-40-63-91z" fill="none" stroke="#2f2f2f" stroke-width="1"/>
            <path d="M867 460c0-60 38-110 86-110 47 0 86 50 86 110s-39 109-86 109c-48 0-86-49-86-109z" fill="none" stroke="#2f2f2f" stroke-width="1"/>
            <ellipse cx="954" cy="455" rx="71" ry="93" fill="none" stroke="#f7a04a" stroke-width="3"/>
            <ellipse cx="953" cy="455" rx="99.500" ry="132" fill="none" stroke="#a8aedb" stroke-width="1.500"/>
            <path d="M877 360 855 443" stroke="#d9a860" stroke-width=".8"/>
            <path d="M854 443 953 455" stroke="#0a8fe0" stroke-width="2"/>
            <path d="M843 443 856 438v9z" fill="#0a8fe0"/>
            <circle cx="854" cy="443" r="3.500" fill="#0a8fe0"/>
            <circle cx="892" cy="448" r="4.500" fill="url(#ball)"/>
            <path d="M1006 512 1041 460" stroke="#c8ae5c" stroke-width="2"/>
            <path d="M1049 444 1045 463 1037 457z" fill="url(#gold)"/>
        </svg>
    </div>
</div>

<!-- dialog -->
<div class="absolute left-[84px] top-[43px] w-[328px] h-[684px] bg-[#eeeeee] border-x border-b border-[#d6d6d6]">
    <div class="flex items-center h-[28px] -mx-[1px] bg-[#569fba] text-white pl-[7px] pr-[8px]">
        <svg class="w-[14px] h-[14px]" viewBox="0 0 14 14"><path d="M7 0l1.300 2 2.200-.7.500 2.300 2.300.5-.7 2.200L14 7l-1.400 1.700.7 2.200-2.300.5-.5 2.300-2.200-.7L7 14l-1.300-1.100-2.200.7-.5-2.300-2.300-.5.7-2.200L0 7l1.400-1.300-.7-2.200 2.300-.5.500-2.300 2.200.7z" fill="#fff"/><circle cx="7" cy="7" r="2.500" fill="#569fba"/></svg>
        <span class="ml-[8px] text-[14px] leading-none">拉伸</span>
        <svg class="w-[14px] h-[14px] ml-auto" viewBox="0 0 14 14"><path d="M4 3a5.500 5.500 0 1 0 5-.4" fill="none" stroke="#fff" stroke-width="1.700"/><path d="M8 0v5l3-3z" fill="#fff"/></svg>
        <svg class="w-[13px] h-[13px] ml-[7px]" viewBox="0 0 13 13"><path d="M1.500 1.500l10 10M11.500 1.500l-10 10" stroke="#fff" stroke-width="2"/></svg>
    </div>

    <div class="mx-[5px] bg-white border-b border-[#c8c8c8] h-[104px] px-[9px]">
        <div class="flex items-center justify-between h-[30px] pb-[3px] -ml-[2px] -mr-[3px]"><span class="text-[14px] text-[#1d6f93]">表区域驱动</span><svg class="w-[12px] h-[8px]"><use href="#up"/></svg></div>
        <div class="flex items-center h-[32px] bg-[#ffdd75] pl-[2px]">
            <svg class="w-[12px] h-[10px]"><use href="#check"/></svg>
            <span class="ml-[6px]">选择曲线 (1)</span>
            <span class="ml-auto w-[24px] h-[24px] bg-white border border-[#aaa] flex items-center justify-center"><svg class="w-[20px] h-[20px]"><use href="#vec"/></svg></span>
            <span class="ml-[2px] w-[24px] h-[24px] bg-white border border-[#aaa] flex items-center justify-center"><svg class="w-[20px] h-[20px]"><use href="#sketchStar"/></svg></span>
            <span class="ml-[2px] w-[32px] h-[32px] flex items-center justify-center"><svg class="w-[28px] h-[28px]"><use href="#regionCurve"/></svg></span>
        </div>
        <div class="flex items-center justify-between h-[32px] mt-[2px]">
            <span>指定原始曲线</span>
            <span class="w-[32px] h-[32px] border border-[#aaa] flex items-center justify-center"><svg class="w-[28px] h-[28px]"><use href="#originCurve"/></svg></span>
        </div>
    </div>

    <div class="mx-[5px] mt-[4px] bg-white border-b border-[#c8c8c8] h-[70px] px-[9px]">
        <div class="flex items-center justify-between h-[30px] pb-[5px] -ml-[2px] -mr-[3px]"><span class="text-[14px] text-[#1d6f93]">方向</span><svg class="w-[12px] h-[8px]"><use href="#up"/></svg></div>
        <div class="flex items-center h-[32px] pl-[2px]">
            <svg class="w-[12px] h-[10px]"><use href="#check"/></svg>
            <span class="ml-[6px]">指定矢量</span>
            <span class="ml-auto w-[24px] h-[24px] bg-white border border-[#aaa] flex items-center justify-center"><svg class="w-[20px] h-[20px]"><use href="#vec"/></svg></span>
            <span class="ml-[2px] w-[24px] h-[24px] bg-white border border-[#aaa] flex items-center justify-center"><svg class="w-[20px] h-[20px]"><use href="#inferVec"/></svg></span>
            <span class="ml-[2px] w-[32px] h-[32px] border border-[#aaa] flex items-center justify-center"><svg class="w-[28px] h-[28px]"><use href="#zcVec"/></svg></span>
            <span class="w-[17px] h-[32px] border border-l-0 border-[#aaa] flex items-center justify-center"><span class="w-0 h-0 border-x-[3px] border-x-transparent border-t-[3px] border-t-black"></span></span>
        </div>
    </div>

    <div class="mx-[5px] mt-[4px] bg-white border-b border-[#c8c8c8] h-[169px] px-[9px]">
        <div class="flex items-center justify-between h-[30px] pb-[5px] -ml-[2px] -mr-[3px]"><span class="text-[14px] text-[#1d6f93]">限制</span><svg class="w-[12px] h-[8px]"><use href="#up"/></svg></div>
        <div class="flex items-center justify-between h-[26px]">
            <span>开始</span>
            <div class="w-[141px] h-[26px] border border-[#aaa] flex items-center pl-[4px] pr-[5px]"><svg class="w-[15px] h-[15px]"><use href="#valCube"/></svg><span class="ml-[5px]">值</span><span class="ml-auto w-0 h-0 border-x-[4px] border-x-transparent border-t-[4px] border-t-black"></span></div>
        </div>
        <div class="flex items-center justify-between h-[25px] mt-[2px]">
            <span>距离</span>
            <div class="w-[141px] h-[25px] border border-[#aaa] flex items-center pl-[4px] pr-[5px]"><span class="w-[77px]">16</span><span>mm</span><span class="ml-auto w-0 h-0 border-x-[4px] border-x-transparent border-t-[4px] border-t-black"></span></div>
        </div>
        <div class="flex items-center justify-between h-[26px] mt-[2px]">
            <span>结束</span>
            <div class="w-[141px] h-[26px] border border-[#aaa] flex items-center pl-[4px] pr-[5px]"><svg class="w-[15px] h-[15px]"><use href="#valCube"/></svg><span class="ml-[5px]">值</span><span class="ml-auto w-0 h-0 border-x-[4px] border-x-transparent border-t-[4px] border-t-black"></span></div>
        </div>
        <div class="flex items-center justify-between h-[25px] mt-[2px]">
            <span>距离</span>
            <div class="w-[141px] h-[25px] border border-[#aaa] flex items-center pl-[4px] pr-[5px]"><span class="w-[77px]"><span class="bg-[#0a78d7] text-white border-l border-[#f07a20]">26</span></span><span>mm</span><span class="ml-auto w-0 h-0 border-x-[4px] border-x-transparent border-t-[4px] border-t-black"></span></div>
        </div>
        <div class="flex items-center h-[13px] mt-[6px]">
            <span class="w-[13px] h-[13px] border border-[#333]"></span>
            <span class="ml-[5px]">开放轮廓智能体</span>
        </div>
    </div>

    <div class="mx-[5px] mt-[4px] bg-white border-b border-[#c8c8c8] h-[98px] px-[9px]">
        <div class="flex items-center justify-between h-[30px] pb-[5px] -ml-[2px] -mr-[3px]"><span class="text-[14px] text-[#1d6f93]">布尔</span><svg class="w-[12px] h-[8px]"><use href="#up"/></svg></div>
        <div class="flex items-center justify-between h-[26px]">
            <span>布尔</span>
            <div class="w-[141px] h-[26px] border border-[#aaa] flex items-center pl-[4px] pr-[5px]"><svg class="w-[15px] h-[15px]"><use href="#subtract"/></svg><span class="ml-[5px]">减去</span><span class="ml-auto w-0 h-0 border-x-[4px] border-x-transparent border-t-[4px] border-t-black"></span></div>
        </div>
        <div class="flex items-center h-[32px] mt-[2px] pl-[2px]">
            <svg class="w-[12px] h-[10px]"><use href="#check"/></svg>
            <span class="ml-[6px]">选择体 (1)</span>
            <span class="ml-auto w-[32px] h-[32px] border border-[#aaa] flex items-center justify-center"><svg class="w-[24px] h-[24px]"><use href="#orangeCube"/></svg></span>
        </div>
    </div>

    <div class="mx-[5px] mt-[4px] bg-white border-b border-[#c8c8c8] h-[23px] pl-[7px] pr-[6px] flex items-center justify-between"><span class="text-[14px] text-[#1d6f93]">拔模</span><svg class="w-[12px] h-[8px]"><use href="#down"/></svg></div>
    <div class="mx-[5px] mt-[4px] bg-white border-b border-[#c8c8c8] h-[23px] pl-[7px] pr-[6px] flex items-center justify-between"><span class="text-[14px] text-[#1d6f93]">偏置</span><svg class="w-[12px] h-[8px]"><use href="#down"/></svg></div>
    <div class="mx-[5px] mt-[4px] bg-white border-b border-[#c8c8c8] h-[23px] pl-[7px] pr-[6px] flex items-center justify-between"><span class="text-[14px] text-[#1d6f93]">设置</span><svg class="w-[12px] h-[8px]"><use href="#down"/></svg></div>

    <div class="mx-[5px] mt-[4px] bg-white border-b border-[#c8c8c8] h-[70px] px-[9px]">
        <div class="flex items-center justify-between h-[30px] pb-[5px] -ml-[2px] -mr-[3px]"><span class="text-[14px] text-[#1d6f93]">预览</span><svg class="w-[12px] h-[8px]"><use href="#up"/></svg></div>
        <div class="flex items-center h-[32px]">
            <span class="w-[13px] h-[13px] border border-[#333] flex items-center justify-center"><svg class="w-[10px] h-[10px]" viewBox="0 0 10 10"><path d="M1 5l3 3 5-6" fill="none" stroke="#555" stroke-width="1.200"/></svg></span>
            <span class="ml-[5px]">预览</span>
            <span class="ml-auto mr-[2px]">显示结果</span>
            <span class="w-[32px] h-[32px] border border-[#aaa] flex items-center justify-center"><svg class="w-[26px] h-[26px]"><use href="#magnifier"/></svg></span>
        </div>
    </div>

    <div class="flex justify-end gap-[5px] mt-[12px] pr-[15px]">
        <span class="w-[54px] h-[25px] bg-[#72b2c8] text-white flex items-center justify-center gap-[4px]"><span>&lt;</span><span>确定</span><span>&gt;</span></span>
        <span class="w-[54px] h-[25px] bg-[#dedede] border border-[#aaa] flex items-center justify-center">取消</span>
    </div>
</div>

<!-- on-screen input -->
<div class="absolute left-[874px] top-[327px] w-[162px] h-[33px] bg-[#f0f0f0] border border-[#cfcfcf] flex items-center">
    <span class="w-[8px] h-[26px] ml-[2px] grid grid-cols-2 content-between">
        <i class="w-[2px] h-[2px] bg-[#bbb]"></i><i class="w-[2px] h-[2px] bg-[#bbb]"></i><i class="w-[2px] h-[2px] bg-[#bbb]"></i><i class="w-[2px] h-[2px] bg-[#bbb]"></i><i class="w-[2px] h-[2px] bg-[#bbb]"></i><i class="w-[2px] h-[2px] bg-[#bbb]"></i><i class="w-[2px] h-[2px] bg-[#bbb]"></i><i class="w-[2px] h-[2px] bg-[#bbb]"></i><i class="w-[2px] h-[2px] bg-[#bbb]"></i><i class="w-[2px] h-[2px] bg-[#bbb]"></i>
    </span>
    <div class="w-[45px] h-[26px] ml-[7px] bg-white border border-[#aaa] flex items-center pl-[5px] pr-[6px] justify-between"><svg class="w-[15px] h-[15px]"><use href="#valCube"/></svg><span class="w-0 h-0 border-x-[4px] border-x-transparent border-t-[4px] border-t-black"></span></div>
    <span class="ml-[4px]">结束</span>
    <div class="w-[62px] h-[26px] ml-[2px] bg-white border border-[#aaa] flex items-center pl-[5px] pr-[4px] justify-between"><span>26</span><span class="w-0 h-0 border-x-[4px] border-x-transparent border-t-[4px] border-t-black"></span></div>
</div>

<!-- watermark -->
<div class="absolute left-[930px] top-[726px] flex items-start text-[#f2f3f5]">
    <svg class="w-[72px] h-[82px]" viewBox="931 726 71 82">
        <path d="M966 726 1001 747 966 744 945 757 931 747z" fill="#cbe7f6"/>
        <path d="M966 726 1001 747V787L983 764 985 745z" fill="#8bd2f4"/>
        <path d="M1001 787 966 807 945 792 984 788 1001 757z" fill="#74c4ea"/>
        <path d="M966 807 931 787 947 768 948 782 985 788z" fill="#78cef3"/>
        <path d="M931 787V747L947 757V778z" fill="#a2d8f4"/>
        <path d="M966 743 987 755V779L966 791 945 779V755z" fill="#e3e4e6"/>
        <path d="M966 749 982 758 966 767 950 758z" fill="#c5e4f6"/>
        <path d="M950 758 966 767V785L950 776z" fill="#9fd5f4"/>
        <path d="M982 758 966 767V785L982 776z" fill="#75c3ea"/>
    </svg>
    <div class="ml-[9px] mt-[9px] flex flex-col font-['Liberation_Sans','Noto_Sans_CJK_SC',sans-serif]">
        <span class="text-[41px] leading-[44px] font-bold whitespace-nowrap">3D世界网</span>
        <span class="mt-[2px] text-[13px] leading-[14px] font-bold tracking-[4.2px] whitespace-nowrap">WWW.3DSJW.COM</span>
    </div>
</div>

<!-- red pen marks on the screenshot -->
<svg class="absolute left-0 top-0 w-[1213px] h-[820px] pointer-events-none" viewBox="0 0 1213 820" fill="none" stroke="#ff0000" stroke-width="2" stroke-linecap="round" stroke-linejoin="round">
    <path d="M197 100C185 97 180 94 170 94 150 95 115 107 100 114 88 120 80 124 84 131 92 138 115 141 150 143 210 146 300 147 345 143 380 141 405 135 413 126 417 117 405 110 385 104 340 98 300 104 260 103 225 103 195 97 172 94"/>
    <path d="M323 84C314 87 309 92 309 103 307 118 307 130 314 136 324 139 336 137 341 130 347 119 346 105 340 95 335 88 322 85 312 93"/>
    <path d="M1047 197C1045 208 1046 218 1042 228"/>
    <path d="M1044 250C1044 258 1039 270 1036 280 1031 295 1028 310 1023 322 1018 338 1010 355 1003 373"/>
    <path d="M992 366C996 372 1001 378 1006 380 1012 378 1017 372 1021 370"/>
    <path d="M1018 376C1008 378 998 378 991 381 987 388 988 396 994 397 1004 398 1016 392 1020 387 1021 383 1014 381 1006 380"/>
    <path d="M1100 217C1106 216 1112 216 1115 219 1118 226 1117 234 1112 239 1106 245 1100 249 1095 253 1104 254 1114 254 1123 254"/>
    <path d="M1093 273C1093 285 1091 297 1087 310 1081 326 1077 337 1072 348 1066 362 1061 376 1057 387"/>
    <path d="M1055 370C1055 376 1056 384 1057 388 1062 385 1068 382 1073 378"/>
    <path d="M1058 388C1050 386 1042 385 1038 391 1036 397 1039 402 1046 403 1053 404 1059 398 1061 392 1060 388 1058 387 1056 390"/>
</svg>

<script>
    const rowsEl = document.getElementById("rows");
    for (let i = 0; i < 33; i++) {
        const row = document.createElement("div");
        row.className = i % 2 ? "flex h-[20px] w-[381px] border-b border-[#e9e9e9] bg-[#f9f9f9]" : "flex h-[20px] w-[381px] border-b border-[#e9e9e9] bg-white";
        const tick = i >= 4 && i <= 6 ? '<svg class="w-[13px] h-[12px] ml-[6px] mt-[5px]"><use href="#check"/></svg>' : "";
        row.innerHTML = `
            <div class="w-[33px] border-r border-[#e9e9e9]"></div>
            <div class="w-[100px] border-r border-[#e9e9e9]">${tick}</div>
            <div class="w-[100px] border-r border-[#e9e9e9]"></div>
            <div class="flex-1"></div>`;
        rowsEl.appendChild(row);
    }
</script>
</body>
</html>
